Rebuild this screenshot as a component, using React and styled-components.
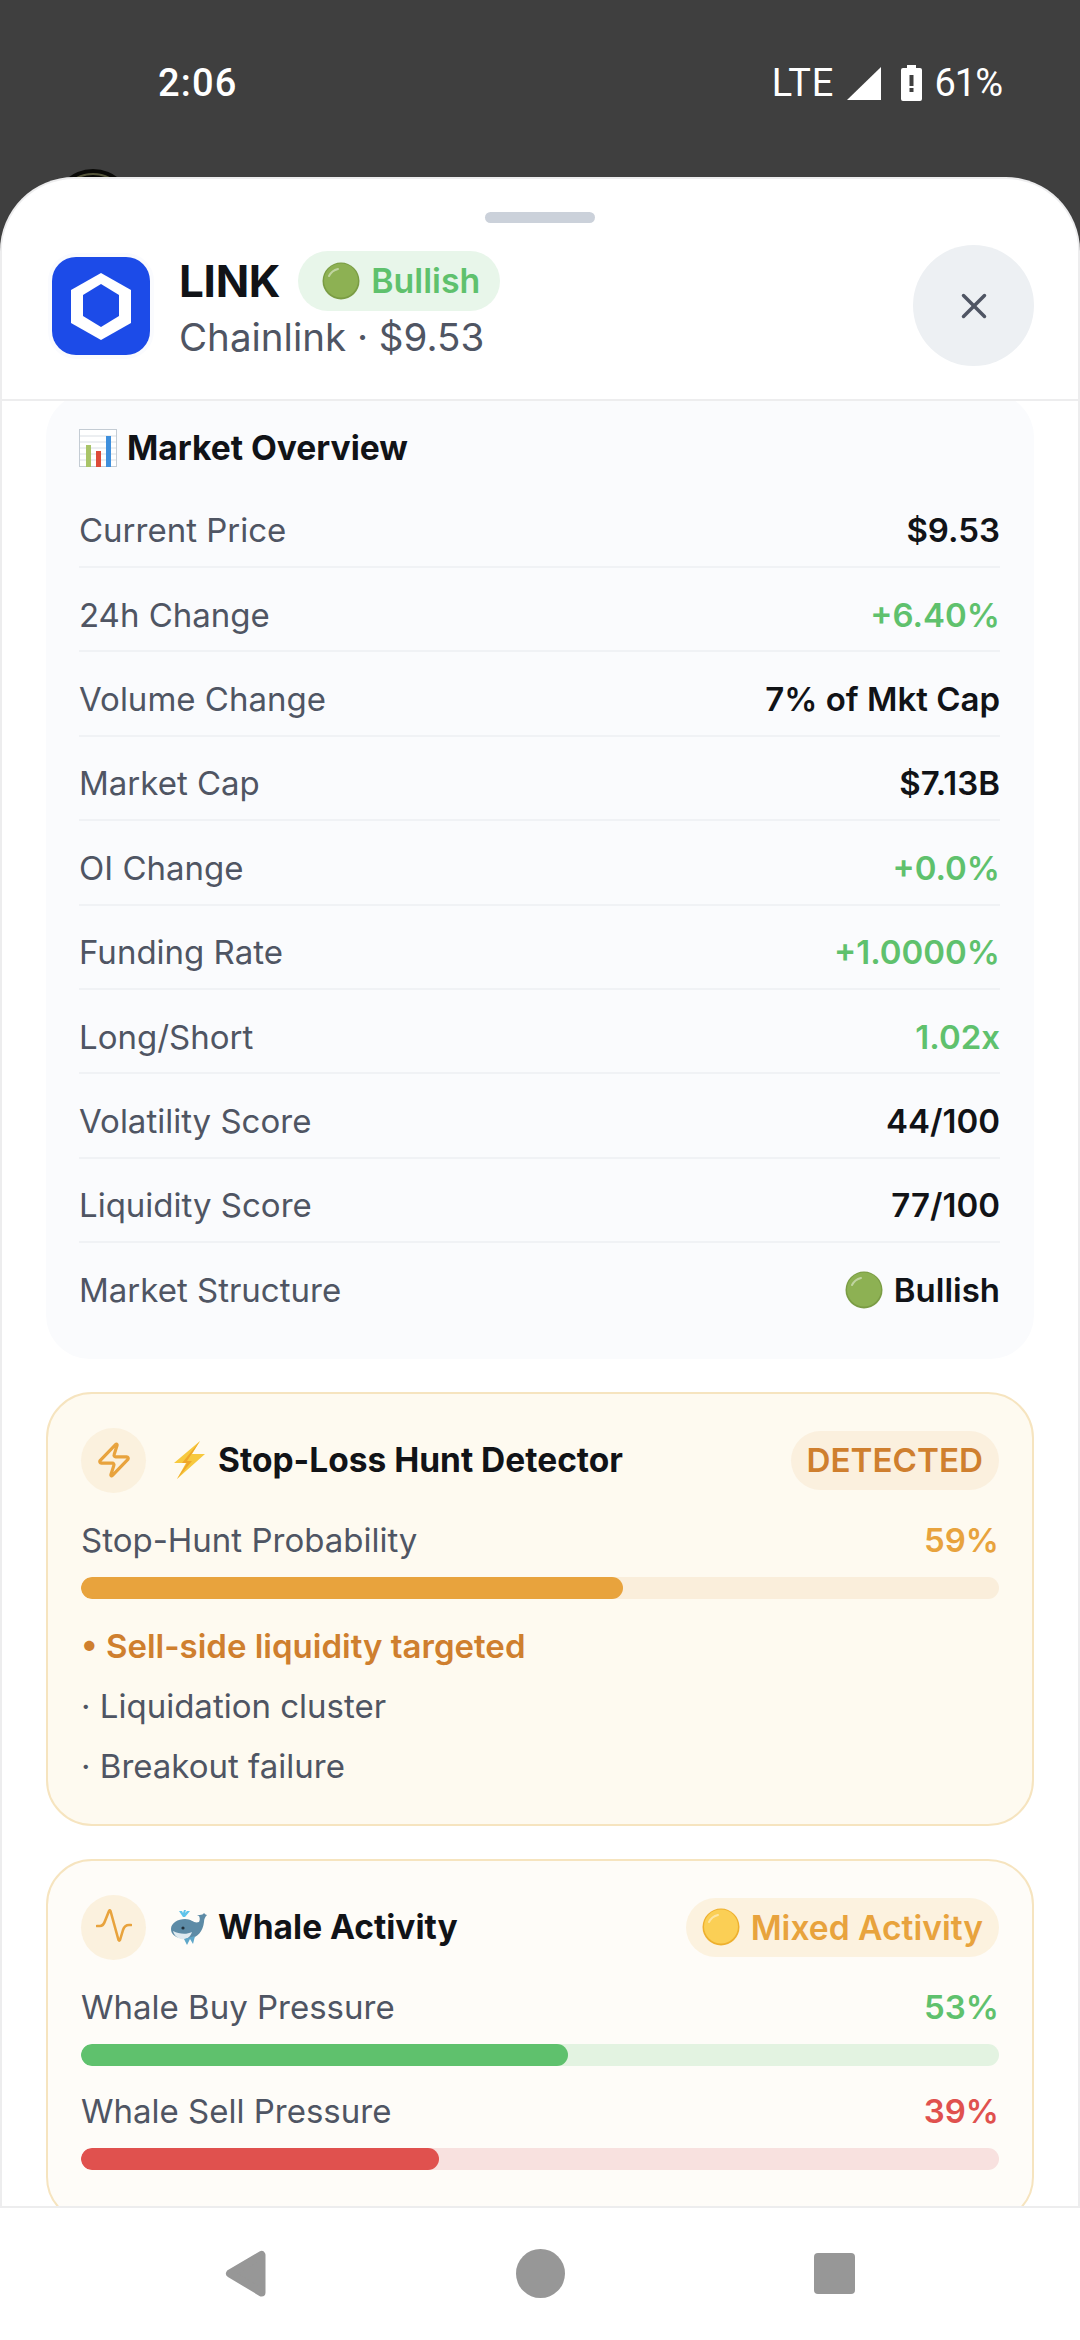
import styled, { createGlobalStyle } from 'styled-components';
import { Zap, X } from 'lucide-react';

const colors = {
  ink: '#111317',
  label: '#4f5563',
  green: '#5fc16d',
  red: '#e0514e',
  amber: '#e8a33d',
  brown: '#cf7f2e',
};

const Global = createGlobalStyle`
  html, body { margin: 0; padding: 0; background: #3f3f3f; }
  * { box-sizing: border-box; }
  body { font-family: Inter, "Liberation Sans", sans-serif; }
`;

const Page = styled.div`
  width: 1080px;
  height: 2340px;
  display: flex;
  flex-direction: column;
  overflow: hidden;
  background: #3f3f3f;
`;

const StatusBar = styled.div`
  position: relative;
  height: 177px;
  flex: none;
  padding: 0 78px 0 158px;
  display: flex;
  justify-content: space-between;
  align-items: flex-start;
  color: #fff;
  font-family: Roboto, sans-serif;
  font-size: 38px;
  line-height: 44px;
`;

const StatusTime = styled.span`
  margin-top: 61px;
  font-weight: 500;
  letter-spacing: 1.2px;
`;

const StatusText = styled.span`
  letter-spacing: ${({ $spacing }) => $spacing}px;
`;

const StatusRight = styled.div`
  margin-top: 61px;
  display: flex;
  align-items: center;
  height: 44px;
`;

const PeekIcon = styled.svg`
  position: absolute;
  left: 54px;
  bottom: 0;
`;

const Sheet = styled.div`
  flex: 1;
  min-height: 0;
  display: flex;
  flex-direction: column;
  background: #fff;
  border: 2px solid #ededee;
  border-bottom: 0;
  border-radius: 74px 74px 0 0;
  overflow: hidden;
`;

const Handle = styled.div`
  width: 110px;
  height: 11px;
  flex: none;
  margin: 33px auto 0;
  border-radius: 6px;
  background: #cbd1da;
`;

const Header = styled.header`
  flex: none;
  display: flex;
  align-items: center;
  padding: 22px 44px 33px 50px;
  border-bottom: 2px solid #ededee;
  position: relative;
  z-index: 1;
  background: #fff;
`;

const Logo = styled.div`
  width: 98px;
  height: 98px;
  flex: none;
  border-radius: 24px;
  background: #1c4be8;
  box-shadow: 0 0 0 4px #fafbfe;
`;

const Heading = styled.div`
  margin-left: 29px;
  flex: 1;
  display: flex;
  flex-direction: column;
`;

const NameRow = styled.div`
  display: flex;
  align-items: center;
  gap: 18px;
  height: 60px;
`;

const Name = styled.span`
  font-size: 44px;
  font-weight: 700;
  letter-spacing: -0.3px;
  color: ${colors.ink};
`;

const Pill = styled.span`
  display: inline-flex;
  align-items: center;
  gap: 11px;
  height: ${({ $h }) => $h || 59}px;
  padding: 0 ${({ $right }) => $right || 16}px 0 ${({ $left }) => $left || 22}px;
  border-radius: 30px;
  font-size: ${({ $size }) => $size || 33.6}px;
  font-weight: 600;
  white-space: nowrap;
  color: ${({ $color }) => $color};
  background: ${({ $bg }) => $bg};
`;

const Subtitle = styled.div`
  margin-top: 2px;
  font-size: 38.5px;
  line-height: 48px;
  color: ${colors.label};
`;

const CloseButton = styled.button`
  width: 121px;
  height: 121px;
  flex: none;
  padding: 0;
  border: 0;
  border-radius: 50%;
  background: #edf0f3;
  color: #4f5563;
  display: flex;
  align-items: center;
  justify-content: center;
`;

const Scroll = styled.main`
  flex: 1;
  min-height: 0;
  overflow: hidden;
  padding: 0 44px;
  display: flex;
  flex-direction: column;
  gap: 33px;
`;

const OverviewCard = styled.section`
  flex: none;
  margin-top: -8px;
  padding: 29.5px 34px 31.5px 33px;
  border-radius: 44px;
  background: #fafbfd;
`;

const OverviewTitle = styled.h2`
  display: flex;
  align-items: center;
  gap: 10px;
  margin: 0 0 11.1px;
  height: 50px;
  font-size: 33.6px;
  font-weight: 700;
  color: ${colors.ink};
`;

const Row = styled.div`
  height: 84.4px;
  padding-top: 11px;
  display: flex;
  justify-content: space-between;
  align-items: center;
  border-bottom: 2px solid ${({ $last }) => ($last ? 'transparent' : '#f0f2f5')};
`;

const RowLabel = styled.span`
  font-size: 33px;
  color: ${colors.label};
`;

const RowValue = styled.span`
  display: inline-flex;
  align-items: center;
  gap: 11px;
  font-size: 33px;
  font-weight: 600;
  color: ${({ $color }) => $color || colors.ink};
`;

const AlertCard = styled.section`
  flex: none;
  padding: 33px 33px 28px;
  border: 2px solid #f6e4bf;
  border-radius: 46px;
  background: ${({ $bg }) => $bg};
`;

const AlertHeader = styled.div`
  display: flex;
  align-items: center;
  height: 66px;
  margin-bottom: 25px;
`;

const IconBubble = styled.div`
  width: 65px;
  height: 65px;
  flex: none;
  border-radius: 50%;
  background: #fbf1de;
  color: ${colors.amber};
  display: flex;
  align-items: center;
  justify-content: center;
`;

const AlertTitle = styled.h3`
  flex: 1;
  display: flex;
  align-items: center;
  gap: 10px;
  margin: 0 0 0 24px;
  font-size: 33.5px;
  font-weight: 700;
  color: ${colors.ink};
`;

const MeterHead = styled.div`
  display: flex;
  justify-content: space-between;
  align-items: center;
  height: 44px;
  font-size: 33px;
  color: ${colors.label};
`;

const MeterValue = styled.span`
  font-weight: 600;
  color: ${({ $color }) => $color};
`;

const Track = styled.div`
  height: 22px;
  margin: 15px 0 23px;
  border-radius: 11px;
  overflow: hidden;
  background: ${({ $bg }) => $bg};
`;

const Fill = styled.div`
  height: 100%;
  border-radius: 11px;
  background: ${({ $color }) => $color};
`;

const Signal = styled.div`
  height: 60px;
  line-height: 60px;
  font-size: 33px;
  color: ${({ $strong }) => ($strong ? colors.brown : colors.label)};
  font-weight: ${({ $strong }) => ($strong ? 600 : 400)};
`;

const Signals = styled.div`
  margin-top: -6px;
`;

const NavBar = styled.nav`
  height: 134px;
  flex: none;
  background: #fff;
  border-top: 2px solid #ededee;
  display: flex;
  align-items: center;
  justify-content: center;
  gap: 249px;
  padding-right: 1px;
  padding-bottom: 1px;
`;

const Ball = ({ size = 38, color = '#8db153', shade = '#7a9c44' }) => (
  <svg width={size} height={size} viewBox="0 0 38 38" style={{ flex: 'none' }}>
    <circle cx="19" cy="19" r="18.5" fill={shade} />
    <circle cx="19" cy="18.5" r="17" fill={color} />
    <path d="M7 14c2-4 5-6 9-7" stroke="#fff" strokeOpacity=".45" strokeWidth="2" fill="none" strokeLinecap="round" />
  </svg>
);

const ChartEmoji = () => (
  <svg width="38" height="38" viewBox="0 0 38 38" style={{ flex: 'none' }}>
    <rect x=".5" y=".5" width="37" height="37" fill="#fff" stroke="#c4ccd4" />
    <path d="M1 7h36M1 13h36M1 19h36M1 25h36M1 31h36" stroke="#d9dee3" strokeWidth="1" />
    <rect x="7" y="16" width="5" height="22" fill="#a9c468" />
    <rect x="17" y="22" width="5" height="16" fill="#dd4b39" />
    <rect x="27" y="7" width="5" height="31" fill="#3f8fdc" />
  </svg>
);

const BoltEmoji = () => (
  <svg width="38" height="38" viewBox="0 0 38 38" style={{ flex: 'none' }}>
    <path d="M30 0 4 22h12L7 38 35 13H22z" fill="#f7c93e" />
    <path d="M30 0 12 22h5L7 38 22 20h-5z" fill="#efa62b" />
  </svg>
);

const WhaleEmoji = () => (
  <svg width="38" height="38" viewBox="0 0 38 38" style={{ flex: 'none' }}>
    <path d="M13 9 9 3h3l1 2 1-3h2l-1 3 2-2h3l-5 6z" fill="#5fc3ea" />
    <path d="M1 21c0-6 7-10 14-10 7 0 9 5 14 3 1-2 1-4 0-6l-2-1c3 0 6 0 7-2 1 1 2 2 3 2-2 2-3 4-3 7-1 9-6 16-16 17-3 0-6 0-8-1C5 29 1 26 1 21z" fill="#5d8ba6" />
    <path d="M3 23c6 3 13 4 19 1-2 6-6 8-11 7-4-1-7-4-8-8z" fill="#dfeaf0" />
    <circle cx="13" cy="20" r="1.600" fill="#22303a" />
    <path d="M14 31l3 6 3-6 3 5 2-8z" fill="#5fa7c9" />
  </svg>
);

const PulseIcon = () => (
  <svg width="36" height="36" viewBox="0 0 36 36" fill="none" stroke="currentColor" strokeWidth="2.600" strokeLinecap="round" strokeLinejoin="round">
    <path d="M1 17h3c3 0 4-2 5-5l4-10c.5-1 1-1 1.500 0l8 29c.5 1 1 1 1.500 0l3-10c1-3 3-5 6-5h2" />
  </svg>
);

const ChainlinkMark = () => (
  <svg width="98" height="98" viewBox="0 0 98 98">
    <path d="M49 16 79 33V66L49 83 19 66V33z" fill="#fff" />
    <path d="M49 27 67 38V59L49 70 31 59V38z" fill="#1c4be8" />
  </svg>
);

const overview = [
  ['Current Price', '$9.53'],
  ['24h Change', '+6.40%', colors.green],
  ['Volume Change', '7% of Mkt Cap'],
  ['Market Cap', '$7.13B'],
  ['OI Change', '+0.0%', colors.green],
  ['Funding Rate', '+1.0000%', colors.green],
  ['Long/Short', '1.02x', colors.green],
  ['Volatility Score', '44/100'],
  ['Liquidity Score', '77/100'],
];

const Meter = ({ label, value, color, track }) => (
  <>
    <MeterHead>
      <span>{label}</span>
      <MeterValue $color={color}>{value}%</MeterValue>
    </MeterHead>
    <Track $bg={track}>
      <Fill $color={color} style={{ width: `${value}%` }} />
    </Track>
  </>
);

export default function App() {
  return (
    <Page>
      <Global />
      <StatusBar>
        <StatusTime>2:06</StatusTime>
        <StatusRight>
          <StatusText $spacing={1}>LTE</StatusText>
          <svg width="34" height="33" viewBox="0 0 34 33" style={{ marginLeft: 13 }}>
            <path d="M34 0V33H0z" fill="#fff" />
          </svg>
          <svg width="21" height="36" viewBox="0 0 21 36" style={{ marginLeft: 20 }}>
            <path d="M6 0h9v3h4a2 2 0 0 1 2 2v29a2 2 0 0 1-2 2H2a2 2 0 0 1-2-2V5a2 2 0 0 1 2-2h4z" fill="#fff" />
            <rect x="8.500" y="10" width="4" height="11" fill="#3f3f3f" />
            <rect x="8.500" y="23" width="4" height="4" fill="#3f3f3f" />
          </svg>
          <StatusText $spacing={-1} style={{ marginLeft: 12 }}>61%</StatusText>
        </StatusRight>
        <PeekIcon width="78" height="8" viewBox="0 0 78 8">
          <circle cx="39" cy="40" r="40" fill="#0a0a07" />
          <circle cx="39" cy="40" r="35" fill="#0a0a07" stroke="#55553a" strokeWidth="2" />
        </PeekIcon>
      </StatusBar>

      <Sheet>
        <Handle />
        <Header>
          <Logo>
            <ChainlinkMark />
          </Logo>
          <Heading>
            <NameRow>
              <Name>LINK</Name>
              <Pill $h={60} $size={33.9} $left={24} $right={20} $color={colors.green} $bg="#e8f6ea">
                <Ball />
                Bullish
              </Pill>
            </NameRow>
            <Subtitle>Chainlink · $9.53</Subtitle>
          </Heading>
          <CloseButton aria-label="Close">
            <X size={42} strokeWidth={2} />
          </CloseButton>
        </Header>

        <Scroll>
          <OverviewCard>
            <OverviewTitle>
              <ChartEmoji />
              Market Overview
            </OverviewTitle>
            {overview.map(([label, value, color]) => (
              <Row key={label}>
                <RowLabel>{label}</RowLabel>
                <RowValue $color={color}>{value}</RowValue>
              </Row>
            ))}
            <Row $last>
              <RowLabel>Market Structure</RowLabel>
              <RowValue>
                <Ball />
                Bullish
              </RowValue>
            </Row>
          </OverviewCard>

          <AlertCard $bg="#fefaf0">
            <AlertHeader>
              <IconBubble>
                <Zap size={38} strokeWidth={2} />
              </IconBubble>
              <AlertTitle>
                <BoltEmoji />
                Stop-Loss Hunt Detector
              </AlertTitle>
              <Pill $size={33.2} $left={16} $color={colors.brown} $bg="#fbf0de">DETECTED</Pill>
            </AlertHeader>
            <Meter label="Stop-Hunt Probability" value={59} color={colors.amber} track="#faeedb" />
            <Signals>
              <Signal $strong>• Sell-side liquidity targeted</Signal>
              <Signal>· Liquidation cluster</Signal>
              <Signal>· Breakout failure</Signal>
            </Signals>
          </AlertCard>

          <AlertCard $bg="#fefcf8">
            <AlertHeader>
              <IconBubble>
                <PulseIcon />
              </IconBubble>
              <AlertTitle>
                <WhaleEmoji />
                Whale Activity
              </AlertTitle>
              <Pill $left={16} $color={colors.amber} $bg="#fcf2df">
                <Ball color="#fbcf55" shade="#eeb02e" />
                Mixed Activity
              </Pill>
            </AlertHeader>
            <Meter label="Whale Buy Pressure" value={53} color={colors.green} track="#e3f3e1" />
            <Meter label="Whale Sell Pressure" value={39} color={colors.red} track="#f8e1df" />
          </AlertCard>
        </Scroll>
      </Sheet>

      <NavBar>
        <svg width="42" height="47" viewBox="0 0 42 47">
          <path d="M5 23.500 36.500 5V42.500z" fill="#979797" stroke="#979797" strokeWidth="8" strokeLinejoin="round" />
        </svg>
        <svg width="49" height="49" viewBox="0 0 49 49">
          <circle cx="24.500" cy="24.500" r="24.500" fill="#979797" />
        </svg>
        <svg width="41" height="41" viewBox="0 0 41 41">
          <rect width="41" height="41" rx="4" fill="#979797" />
        </svg>
      </NavBar>
    </Page>
  );
}
